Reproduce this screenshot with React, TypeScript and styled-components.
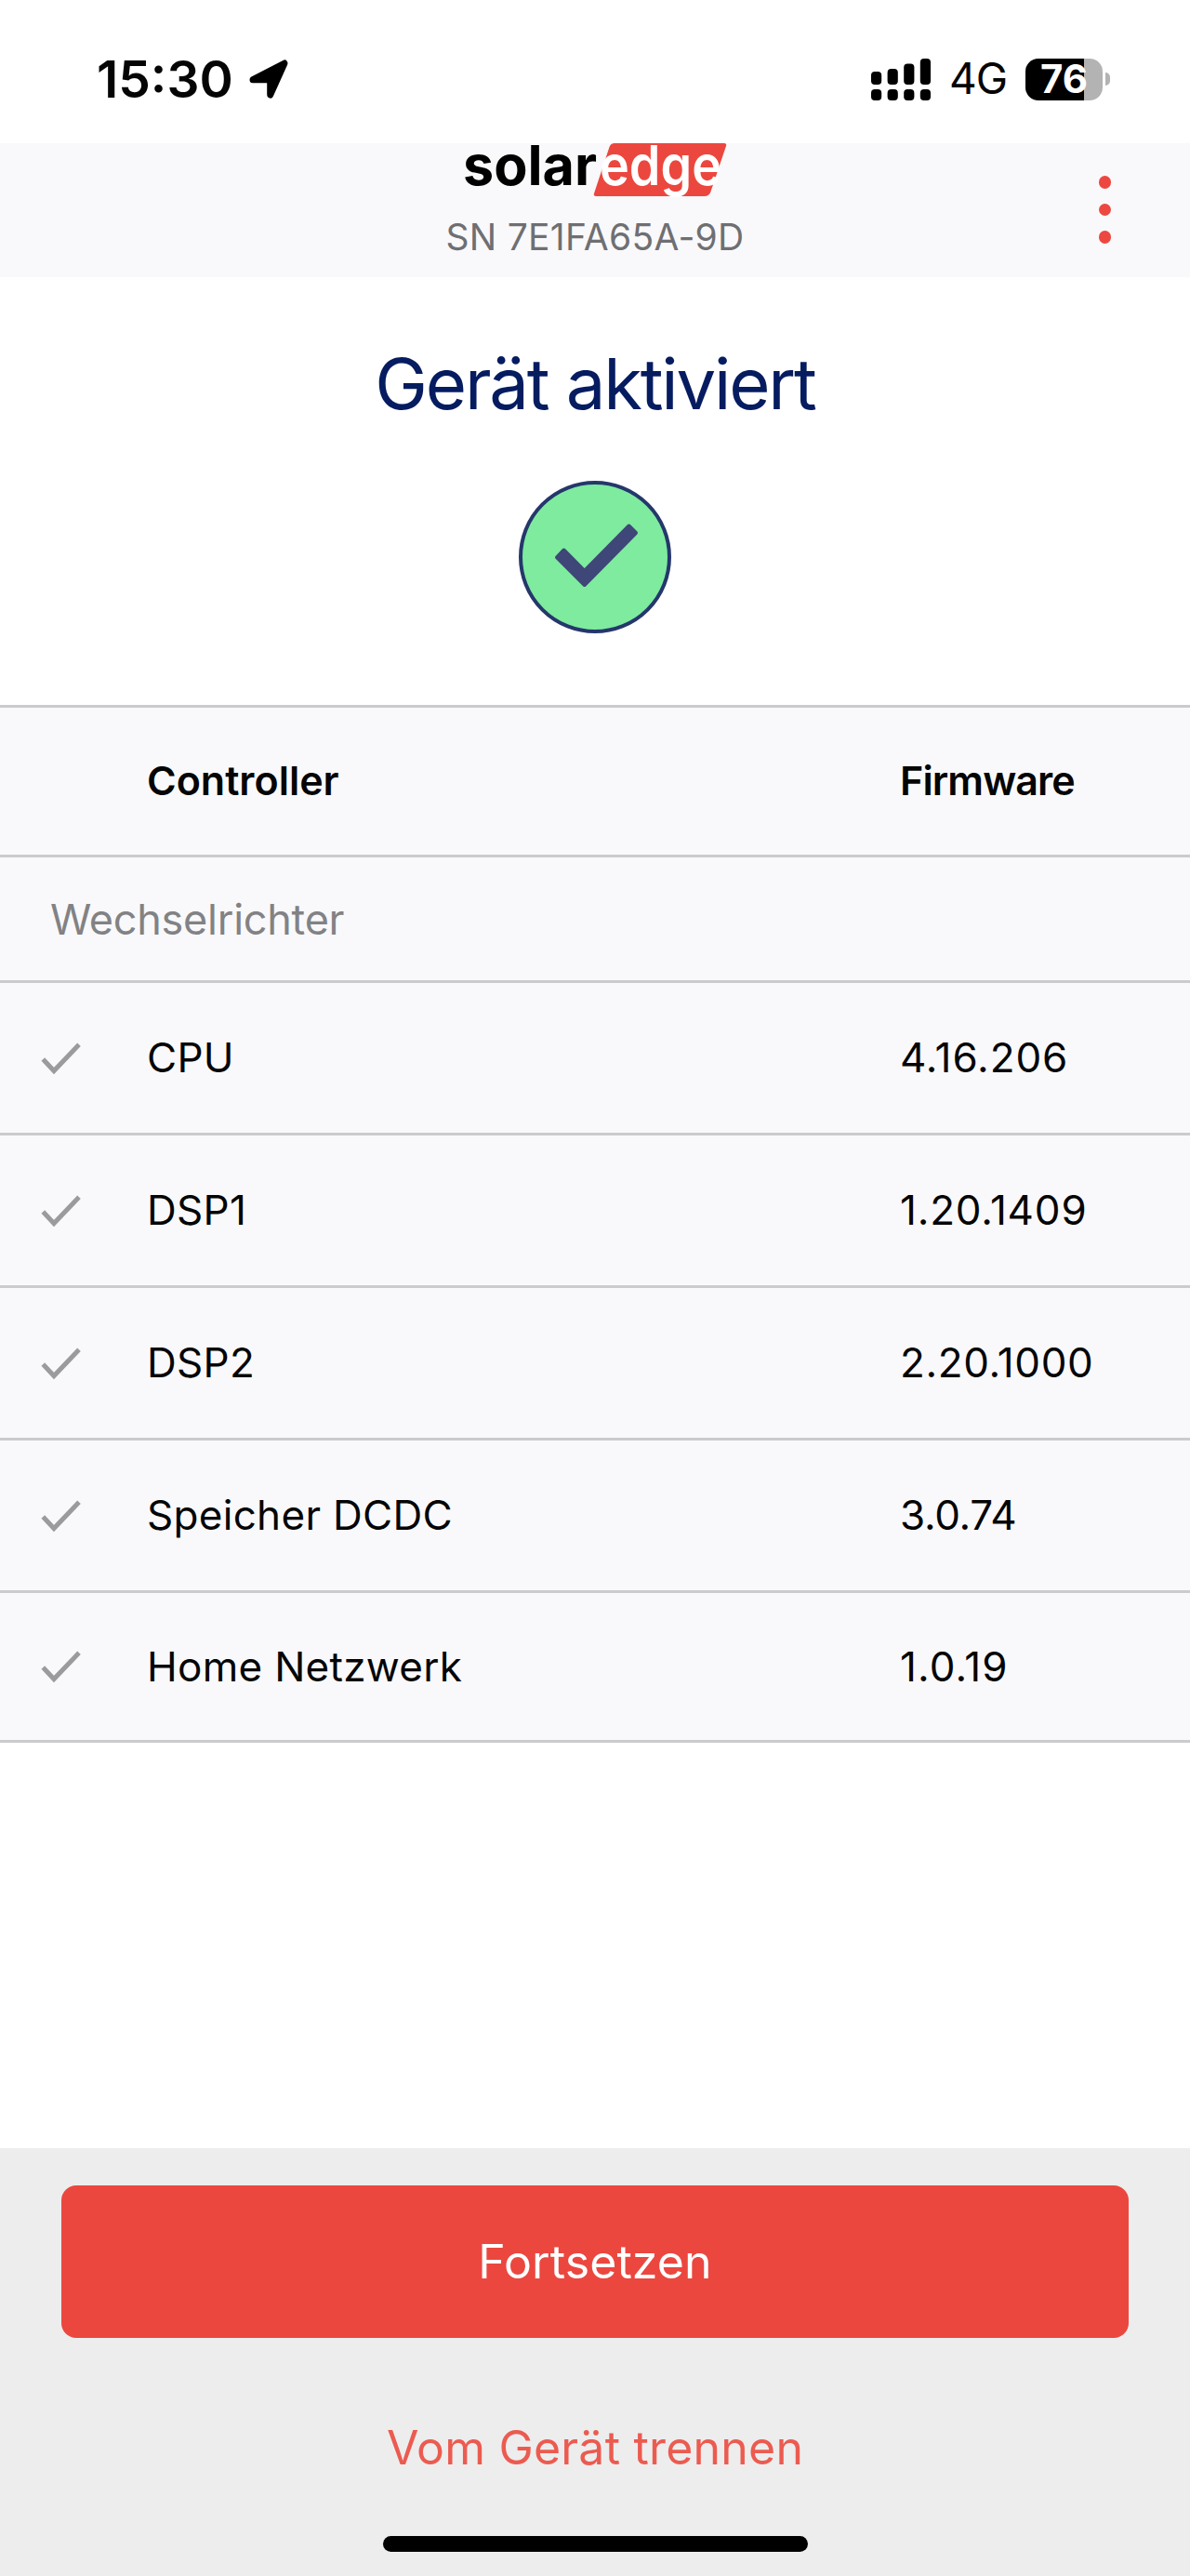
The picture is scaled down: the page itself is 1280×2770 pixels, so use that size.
import React from "react";
import styled, { createGlobalStyle } from "styled-components";

const GlobalStyle = createGlobalStyle`
  *, *::before, *::after { box-sizing: border-box; }
  body {
    margin: 0;
    background: #ffffff;
    font-family: Inter, "Liberation Sans", sans-serif;
    color: #050505;
  }
`;

const Screen = styled.div`
  width: 1280px;
  height: 2770px;
  display: flex;
  flex-direction: column;
  background: #ffffff;
  overflow: hidden;
`;

const Label = styled.span<{ $size: number; $weight?: number; $track?: number; $color?: string }>`
  font-size: ${(p) => p.$size}px;
  font-weight: ${(p) => p.$weight ?? 400};
  letter-spacing: ${(p) => p.$track ?? 0}px;
  color: ${(p) => p.$color ?? "#050505"};
  line-height: 1.2;
  white-space: nowrap;
`;

const StatusBar = styled.div`
  flex: none;
  height: 154px;
  padding: 0 86px 0 104px;
  display: flex;
  justify-content: space-between;
  align-items: flex-start;
`;

const StatusGroup = styled.div<{ $gap: number }>`
  height: 170px;
  display: flex;
  align-items: center;
  gap: ${(p) => p.$gap}px;
`;

const Battery = styled.div`
  display: flex;
  align-items: center;
  gap: 3px;
`;

const BatteryBody = styled.div`
  width: 83px;
  height: 45px;
  border-radius: 14px;
  display: flex;
  align-items: center;
  justify-content: center;
  background: linear-gradient(to right, #000000 63px, #b3b3b3 63px);
`;

const BatteryTip = styled.div`
  width: 5px;
  height: 14px;
  border-radius: 0 7px 7px 0;
  background: #b3b3b3;
`;

const AppHeader = styled.header`
  flex: none;
  height: 144px;
  display: grid;
  grid-template-columns: 1fr 320px 1fr;
  background: #f9f9fb;
`;

const Brand = styled.div`
  grid-column: 2;
  display: flex;
  flex-direction: column;
  align-items: center;
`;

const LogoMark = styled.svg`
  display: block;
  overflow: visible;
`;

const Serial = styled.div`
  margin-top: 16px;
  display: flex;
`;

const MenuButton = styled.div`
  grid-column: 3;
  justify-self: end;
  margin: 35px 85px 0 0;
  display: flex;
  flex-direction: column;
  gap: 16px;
`;

const Dot = styled.i`
  width: 13.5px;
  height: 13.5px;
  border-radius: 50%;
  background: #ec4841;
`;

const Hero = styled.section`
  flex: none;
  height: 460px;
  padding-top: 69px;
  display: flex;
  flex-direction: column;
  align-items: center;
`;

const SuccessIcon = styled.svg`
  display: block;
  margin-top: 58px;
`;

const Table = styled.section`
  flex: none;
  border-top: 3px solid #cbcbcd;
  background: #f9f9fb;
`;

const Row = styled.div<{ $height: number }>`
  height: ${(p) => p.$height}px;
  border-bottom: 3px solid #cbcbcd;
  display: grid;
  grid-template-columns: 158px 810px 1fr;
  align-items: center;
`;

const GroupRow = styled.div`
  height: 135px;
  padding-left: 54px;
  padding-top: 1px;
  border-bottom: 3px solid #cbcbcd;
  display: flex;
  align-items: center;
`;

const CheckCell = styled.span`
  padding-left: 44px;
  padding-top: 2px;
  display: flex;
`;

const Footer = styled.footer`
  margin-top: auto;
  height: 460px;
  padding: 40px 66px 0;
  display: flex;
  flex-direction: column;
  align-items: center;
  background: #ededed;
`;

const PrimaryButton = styled.button`
  width: 100%;
  height: 164px;
  padding: 0;
  border: 0;
  border-radius: 16px;
  background: #eb473f;
  font-family: inherit;
`;

const LinkButton = styled.button`
  height: 80px;
  margin-top: 78px;
  padding: 0;
  border: 0;
  background: none;
  font-family: inherit;
`;

const HomeIndicator = styled.div`
  width: 457px;
  height: 17px;
  margin-top: 55px;
  border-radius: 9px;
  background: #000000;
`;

const LocationArrow = () => (
  <svg width="44" height="44" viewBox="0 0 44 44">
    <path
      d="M5 22.7 L39 5 L23.7 39 L23.7 22.7 Z"
      fill="#000"
      stroke="#000"
      strokeWidth="7"
      strokeLinejoin="round"
    />
  </svg>
);

const signalBars = [
  { x: 0, y: 14 },
  { x: 17.6, y: 11 },
  { x: 35.2, y: 5.5 },
  { x: 52.8, y: 0 },
];

const Signal = () => (
  <svg width="64" height="45" viewBox="0 0 64 45">
    {signalBars.map((b) => (
      <g key={b.x}>
        <rect x={b.x} y={b.y} width="11.2" height={28 - b.y} rx="4" />
        <rect x={b.x} y="33" width="11.2" height="12" rx="4" />
      </g>
    ))}
  </svg>
);

const Logo = () => (
  <LogoMark width="320" height="62" viewBox="480 154 320 62">
    <path
      d="M661 154 H779 Q782 154 781 157 L764.5 206 Q763 211 758 211 H641 Q638 211 639 208 L655.5 158 Q657 154 661 154 Z"
      fill="#ec473e"
    />
    <text x="498" y="199" fontSize="59" fontWeight="700" fill="#000" textLength="144" lengthAdjust="spacingAndGlyphs">
      solar
    </text>
    <text x="645" y="199" fontSize="59" fontWeight="600" fill="#fff" textLength="131" lengthAdjust="spacingAndGlyphs">
      edge
    </text>
  </LogoMark>
);

const Check = () => (
  <svg width="44" height="36" viewBox="0 0 44 36">
    <path d="M2.3 18 L14 30.5 L41 2.3" fill="none" stroke="#9b9b9d" strokeWidth="5" />
  </svg>
);

const controllers = [
  { name: "CPU", version: "4.16.206", track: 0.9, height: 164 },
  { name: "DSP1", version: "1.20.1409", track: 0.8, height: 164 },
  { name: "DSP2", version: "2.20.1000", track: 0.6, height: 164 },
  { name: "Speicher DCDC", version: "3.0.74", track: -0.3, height: 164 },
  { name: "Home Netzwerk", version: "1.0.19", track: 1.1, height: 161 },
];

export default function App() {
  return (
    <>
      <GlobalStyle />
      <Screen>
        <StatusBar>
          <StatusGroup $gap={16}>
            <Label $size={55} $weight={600}>15:30</Label>
            <LocationArrow />
          </StatusGroup>
          <StatusGroup $gap={20}>
            <Signal />
            <Label $size={46} $weight={400} $track={-1}>4G</Label>
            <Battery>
              <BatteryBody>
                <Label $size={42} $weight={700} $color="#fff">76</Label>
              </BatteryBody>
              <BatteryTip />
            </Battery>
          </StatusGroup>
        </StatusBar>

        <AppHeader>
          <Brand>
            <Logo />
            <Serial>
              <Label $size={39} $track={0.3} $color="#6f6f72">SN 7E1FA65A-9D</Label>
            </Serial>
          </Brand>
          <MenuButton>
            <Dot />
            <Dot />
            <Dot />
          </MenuButton>
        </AppHeader>

        <Hero>
          <Label $size={76} $color="#061c60" $track={-2.2}>Gerät aktiviert</Label>
          <SuccessIcon width="166" height="166" viewBox="557 516 166 166">
            <circle cx="640" cy="599" r="80" fill="#7eeb9f" stroke="#25376b" strokeWidth="4" />
            <path
              d="M599 599.3 L606.5 591.5 L628.7 614 L676.5 565.5 L684 573 L628.7 629 Z"
              fill="#3f4678"
              stroke="#3f4678"
              strokeWidth="4"
              strokeLinejoin="round"
            />
          </SuccessIcon>
        </Hero>

        <Table>
          <Row $height={161}>
            <span />
            <Label $size={43} $weight={600}>Controller</Label>
            <Label $size={43} $weight={600} $track={-0.9}>Firmware</Label>
          </Row>
          <GroupRow>
            <Label $size={45} $track={-0.25} $color="#828284">Wechselrichter</Label>
          </GroupRow>
          {controllers.map((c) => (
            <Row key={c.name} $height={c.height}>
              <CheckCell>
                <Check />
              </CheckCell>
              <Label $size={44} $track={0.3}>{c.name}</Label>
              <Label $size={44} $track={c.track}>{c.version}</Label>
            </Row>
          ))}
        </Table>

        <Footer>
          <PrimaryButton>
            <Label $size={50} $track={0.1} $color="#fff">Fortsetzen</Label>
          </PrimaryButton>
          <LinkButton>
            <Label $size={50} $track={0.2} $color="#ec5b50">Vom Gerät trennen</Label>
          </LinkButton>
          <HomeIndicator />
        </Footer>
      </Screen>
    </>
  );
}
